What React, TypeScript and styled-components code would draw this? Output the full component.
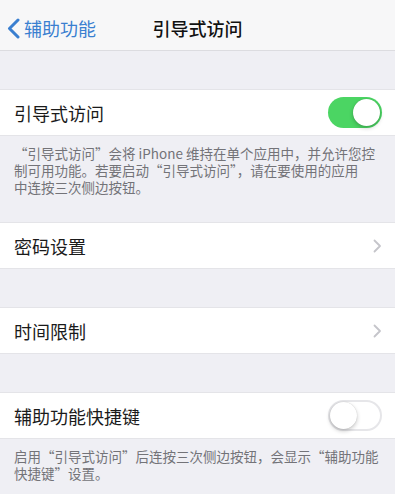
import styled, { createGlobalStyle } from 'styled-components';

const GlobalStyle = createGlobalStyle`
  html, body {
    margin: 0;
    padding: 0;
    background: #efeff4;
  }
  body {
    font-family: "Noto Sans CJK SC", "Noto Sans", sans-serif;
    -webkit-font-smoothing: antialiased;
  }
`;

const Page = styled.div`
  width: 395px;
  min-height: 494px;
  background: #efeff4;
  overflow: hidden;
`;

const NavBar = styled.div`
  height: 51px;
  display: grid;
  grid-template-columns: 1fr auto 1fr;
  align-items: center;
  padding-top: 6px;
  box-sizing: border-box;
  background: #f7f7f8;
  border-bottom: 1px solid #dcdce0;
`;

const BackButton = styled.div`
  display: flex;
  align-items: center;
  gap: 4px;
  padding-left: 7px;
  color: #3a7fd0;
  font-size: 18px;
`;

const Title = styled.div`
  font-size: 18px;
  color: #111;
  font-weight: 500;
`;

const Gap = styled.div`
  height: 38px;
`;

const Cell = styled.div`
  height: 47px;
  box-sizing: border-box;
  display: flex;
  align-items: center;
  justify-content: space-between;
  padding: 0 13px 0 14px;
  background: #fff;
  border-top: 1px solid #e4e4e8;
  border-bottom: 1px solid #e4e4e8;
`;

const Label = styled.div`
  font-size: 18px;
  color: #1a1a1a;
`;

const Footer = styled.div<{ $bottom: number }>`
  padding: 9px 14px ${(p) => p.$bottom}px;
  font-size: 13.5px;
  line-height: 17px;
  color: #737378;
  white-space: nowrap;
`;

const Track = styled.div<{ $on: boolean }>`
  width: 54px;
  height: 31px;
  border-radius: 16px;
  box-sizing: border-box;
  position: relative;
  background: ${(p) => (p.$on ? '#4bd563' : '#fff')};
  border: ${(p) => (p.$on ? 'none' : '2px solid #e6e6e9')};
`;

const Knob = styled.div<{ $on: boolean }>`
  position: absolute;
  top: ${(p) => (p.$on ? 2 : 0)}px;
  ${(p) => (p.$on ? 'right: 2px;' : 'left: 0;')}
  width: 27px;
  height: 27px;
  border-radius: 50%;
  background: #fff;
  box-shadow: 0 2px 4px rgba(0, 0, 0, 0.22), 0 0 1px rgba(0, 0, 0, 0.2);
`;

const Toggle = ({ on }: { on: boolean }) => (
  <Track $on={on}>
    <Knob $on={on} />
  </Track>
);

const Chevron = () => (
  <svg width="9" height="14" viewBox="0 0 9 14" fill="none">
    <path d="M1.5 1.5 L7 7 L1.5 12.5" stroke="#c5c5ca" strokeWidth="1.8" strokeLinecap="round" strokeLinejoin="round" />
  </svg>
);

const BackChevron = () => (
  <svg width="13" height="21" viewBox="0 0 13 21" fill="none">
    <path d="M11 2 L2.5 10.5 L11 19" stroke="#3a7fd0" strokeWidth="3" strokeLinecap="round" strokeLinejoin="round" />
  </svg>
);

const App = () => {
  return (
    <Page>
      <GlobalStyle />
      <NavBar>
        <BackButton>
          <BackChevron />
          辅助功能
        </BackButton>
        <Title>引导式访问</Title>
        <div />
      </NavBar>
      <Gap />
      <Cell>
        <Label>引导式访问</Label>
        <Toggle on />
      </Cell>
      <Footer $bottom={26}>
        “引导式访问”会将 iPhone 维持在单个应用中，并允许您控
        <br />
        制可用功能。若要启动“引导式访问”，请在要使用的应用
        <br />
        中连按三次侧边按钮。
      </Footer>
      <Cell>
        <Label>密码设置</Label>
        <Chevron />
      </Cell>
      <Gap />
      <Cell>
        <Label>时间限制</Label>
        <Chevron />
      </Cell>
      <Gap />
      <Cell>
        <Label>辅助功能快捷键</Label>
        <Toggle on={false} />
      </Cell>
      <Footer $bottom={16}>
        启用“引导式访问”后连按三次侧边按钮，会显示“辅助功能
        <br />
        快捷键”设置。
      </Footer>
    </Page>
  );
};

export default App;
